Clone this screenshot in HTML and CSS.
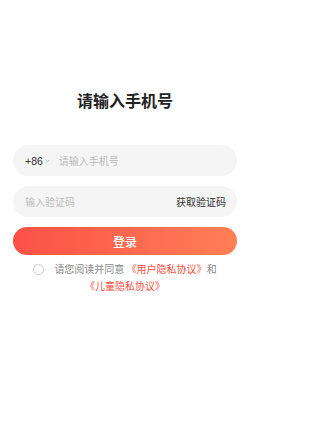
FILE: index.html
```html
<!DOCTYPE html>
<html lang="zh">
<head>
<meta charset="utf-8">
<meta name="viewport" content="width=250">
<link rel="stylesheet" href="styles.css">
</head>
<body>
<main class="page">
  <h1 class="title">请输入手机号</h1>
  <div class="field">
    <span class="code">+86<svg class="chev" viewBox="0 0 6 4" width="5" height="4"><path d="M0.8 0.8 L3 3 L5.2 0.8" fill="none" stroke="#999" stroke-width="0.9"/></svg></span>
    <span class="ph">请输入手机号</span>
  </div>
  <div class="field field-sms">
    <span class="ph">输入验证码</span>
    <span class="get">获取验证码</span>
  </div>
  <button class="login">登录</button>
  <p class="agree"><span class="radio"></span>请您阅读并同意 <span class="link">《用户隐私协议》</span>和<span class="link">《儿童隐私协议》</span></p>
</main>
</body>
</html>
```
FILE: styles.css
```css
html, body {
  margin: 0;
  padding: 0;
  background: #fff;
}
body {
  font-family: "Noto Sans CJK SC", "Noto Sans", sans-serif;
  color: #333;
}
.page {
  width: 250px;
  box-sizing: border-box;
  padding: 90px 13px 0;
  display: flex;
  flex-direction: column;
}
.title {
  margin: 0 0 35px;
  font-size: 16px;
  line-height: 20px;
  font-weight: 600;
  text-align: center;
  color: #222;
}
.field {
  height: 31px;
  border-radius: 16px;
  background: #f5f5f5;
  display: flex;
  align-items: center;
  padding: 0 11px 0 12px;
  margin-bottom: 10px;
  font-size: 10px;
}
.code {
  color: #333;
  display: flex;
  align-items: center;
  gap: 2px;
  margin-right: 9px;
  font-family: "Liberation Sans", "Noto Sans CJK SC", sans-serif;
  font-size: 10.5px;
}
.chev {
  display: block;
  margin-top: 1px;
}
.ph {
  color: #bbb;
  flex: 1;
}
.get {
  color: #333;
}
.login {
  height: 28px;
  border: 0;
  border-radius: 14px;
  background: linear-gradient(90deg, #fb5147 0%, #ff7f56 100%);
  color: #fff;
  font-family: inherit;
  font-size: 12px;
  font-weight: 500;
  padding: 0;
}
.agree {
  margin: 5px 17px 0;
  font-size: 10px;
  line-height: 17px;
  color: #888;
  text-align: center;
}
.radio {
  display: inline-block;
  width: 9px;
  height: 9px;
  border: 1px solid #ccc;
  border-radius: 50%;
  vertical-align: -2px;
  margin-right: 10px;
}
.link {
  color: #f0503c;
}
```
